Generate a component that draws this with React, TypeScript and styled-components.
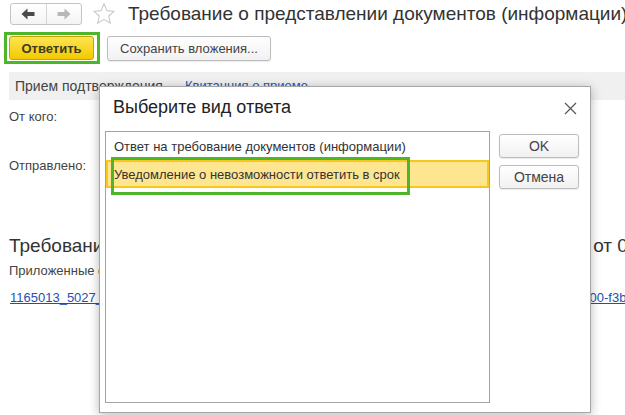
import styled, { createGlobalStyle } from "styled-components"

const GlobalStyle = createGlobalStyle`
  html, body {
    margin: 0;
    padding: 0;
    background: #fff;
    overflow: hidden;
  }
  body {
    font-family: "Liberation Sans", Arial, sans-serif;
    color: #333;
  }
`

const REPLY_KINDS = [
  "Ответ на требование документов (информации)",
  "Уведомление о невозможности ответить в срок",
]

export default function App() {
  return (
    <>
      <GlobalStyle />
      <Page>
        <Header>
          <NavGroup>
            <NavButton>
              <Arrow $active />
            </NavButton>
            <NavButton>
              <Arrow $flip />
            </NavButton>
          </NavGroup>
          <Star />
          <Title>Требование о представлении документов (информации)</Title>
        </Header>

        <CommandBar>
          <Marked>
            <DefaultButton>Ответить</DefaultButton>
          </Marked>
          <Button>Сохранить вложения...</Button>
        </CommandBar>

        <Tabs>
          <Tab>Прием подтверждения</Tab>
          <TabLink>Квитанция о приеме</TabLink>
        </Tabs>

        <Fields>
          <FieldRow $height={45}>От кого:</FieldRow>
          <FieldRow $height={22}>Отправлено:</FieldRow>
        </Fields>

        <DocHeading>
          Требование о представлении документов (информации) № 21-07 от 05.03.2020
        </DocHeading>
        <Caption>Приложенные файлы:</Caption>
        <FileLink>
          1165013_5027_502701001_502701001_20200305_12345678900_7c1d2a4e-5b3f-4e61-9a2b-1c5e-00-f3b8d2c14e7a.xml
        </FileLink>

        <Dialog>
          <DialogHead>
            <DialogTitle>Выберите вид ответа</DialogTitle>
            <CloseIcon />
          </DialogHead>
          <DialogBody>
            <List>
              {REPLY_KINDS.map((kind, i) => (
                <ListRow key={kind} $selected={i === 1}>
                  {kind}
                </ListRow>
              ))}
              <RowMark />
            </List>
            <Actions>
              <Button $wide>OK</Button>
              <Button $wide>Отмена</Button>
            </Actions>
          </DialogBody>
        </Dialog>
      </Page>
    </>
  )
}

function Arrow({ $active, $flip }: { $active?: boolean; $flip?: boolean }) {
  return (
    <svg
      width="14"
      height="12"
      viewBox="0 0 14 12"
      style={{ transform: $flip ? "scaleX(-1)" : undefined }}
    >
      <path
        d="M0.5 6 L6.5 0.5 L6.5 4 L13.5 4 L13.5 8 L6.5 8 L6.5 11.5 Z"
        fill={$active ? "#4a4a4a" : "#b8b8b8"}
      />
    </svg>
  )
}

function Star() {
  return (
    <StarBox>
      <svg width="24" height="24" viewBox="0 0 24 24">
        <path
          d="M12 1.8 L14.9 8.6 L22.3 9.2 L16.7 14 L18.4 21.3 L12 17.4 L5.6 21.3 L7.3 14 L1.7 9.2 L9.1 8.6 Z"
          fill="none"
          stroke="#c9c9c9"
          strokeWidth="1.1"
          strokeLinejoin="round"
        />
      </svg>
    </StarBox>
  )
}

function CloseIcon() {
  return (
    <CloseBox>
      <svg width="13" height="13" viewBox="0 0 13 13">
        <path d="M1 1 L12 12 M12 1 L1 12" stroke="#555" strokeWidth="1.2" />
      </svg>
    </CloseBox>
  )
}

const Page = styled.div`
  position: relative;
  width: 625px;
  height: 415px;
  overflow: hidden;
`

const Header = styled.div`
  display: flex;
  align-items: center;
  height: 22px;
  padding: 3px 0 0 10px;
  white-space: nowrap;
`

const NavGroup = styled.div`
  display: flex;
  flex-shrink: 0;
  width: 72px;
  height: 22px;
  box-sizing: border-box;
  border: 1px solid #c4c4c4;
  border-radius: 3px;
  background: linear-gradient(#fff, #f4f4f4);
`

const NavButton = styled.div`
  flex: 1;
  display: flex;
  align-items: center;
  justify-content: center;
  & + & {
    border-left: 1px solid #d6d6d6;
  }
`

const StarBox = styled.div`
  display: flex;
  flex-shrink: 0;
  margin: 0 12px 0 10px;
`

const Title = styled.h1`
  flex-shrink: 0;
  margin: 0;
  font-size: 19px;
  font-weight: normal;
  color: #333;
`

const CommandBar = styled.div`
  display: flex;
  align-items: center;
  gap: 7px;
  margin-top: 7px;
  padding-left: 4px;
`

const Marked = styled.div`
  display: flex;
  align-items: center;
  width: 96px;
  height: 32px;
  box-sizing: border-box;
  border: 3px solid #4cb52a;
  padding: 0 3px 0 2px;
`

const DefaultButton = styled.div`
  flex: 1;
  height: 24px;
  box-sizing: border-box;
  display: flex;
  align-items: center;
  justify-content: center;
  border: 1px solid #c9a200;
  border-radius: 3px;
  background: linear-gradient(#fbe552, #f3ca00);
  font-size: 13px;
  font-weight: bold;
  color: #3f3a20;
`

const Button = styled.div<{ $wide?: boolean }>`
  display: flex;
  align-items: center;
  justify-content: center;
  box-sizing: border-box;
  height: ${(p) => (p.$wide ? "24px" : "25px")};
  width: ${(p) => (p.$wide ? "80px" : "164px")};
  border: 1px solid #bcbcbc;
  border-radius: 3px;
  background: linear-gradient(#fff, #f1f1f1);
  box-shadow: 0 1px 1px rgba(0, 0, 0, 0.08);
  font-size: ${(p) => (p.$wide ? "14px" : "13px")};
  color: #444;
`

const Tabs = styled.div`
  display: flex;
  align-items: center;
  gap: 22px;
  height: 28px;
  margin: 8px 0 0 9px;
  padding-left: 6px;
  background: #f0f0f0;
  white-space: nowrap;
`

const Tab = styled.span`
  font-size: 14px;
  color: #444;
`

const TabLink = styled.span`
  font-size: 13px;
  color: #1f56b8;
  border-bottom: 1px dashed #1f56b8;
`

const Fields = styled.div`
  display: flex;
  flex-direction: column;
  gap: 4px;
  margin: 6px 0 0 9px;
`

const FieldRow = styled.div<{ $height: number }>`
  height: ${(p) => p.$height}px;
  line-height: 22px;
  font-size: 13px;
  color: #444;
`

const DocHeading = styled.h2`
  margin: 58px 0 0 9px;
  font-size: 19px;
  font-weight: normal;
  color: #333;
  white-space: nowrap;
`

const Caption = styled.div`
  margin: 6px 0 0 9px;
  font-size: 13px;
  color: #444;
`

const FileLink = styled.div`
  margin: 12px 0 0 10px;
  font-size: 13px;
  color: #1f4fb4;
  text-decoration: underline;
  white-space: nowrap;
`

const Dialog = styled.div`
  position: absolute;
  left: 99px;
  top: 86px;
  width: 492px;
  height: 327px;
  box-sizing: border-box;
  border: 1px solid #a6a6a6;
  background: #fff;
  box-shadow: 0 2px 10px rgba(0, 0, 0, 0.28);
  display: flex;
  flex-direction: column;
`

const DialogHead = styled.div`
  display: flex;
  align-items: center;
  justify-content: space-between;
  height: 40px;
  padding: 0 13px 0 13px;
`

const DialogTitle = styled.div`
  font-size: 18px;
  color: #222;
`

const CloseBox = styled.div`
  display: flex;
  margin-top: 2px;
`

const DialogBody = styled.div`
  display: flex;
  gap: 9px;
  padding: 4px 11px 0 5px;
`

const List = styled.div`
  position: relative;
  width: 386px;
  height: 272px;
  box-sizing: border-box;
  border: 1px solid #a3a3a3;
`

const ListRow = styled.div<{ $selected?: boolean }>`
  height: 28px;
  box-sizing: border-box;
  display: flex;
  align-items: center;
  padding-left: ${(p) => (p.$selected ? "6px" : "8px")};
  font-size: 13px;
  color: #333;
  background: ${(p) => (p.$selected ? "#fee590" : "transparent")};
  border: ${(p) => (p.$selected ? "2px solid #f7c71a" : "none")};
`

const RowMark = styled.div`
  position: absolute;
  left: 5px;
  top: 25px;
  width: 299px;
  height: 38px;
  box-sizing: border-box;
  border: 3px solid #4cb52a;
`

const Actions = styled.div`
  display: flex;
  flex-direction: column;
  gap: 7px;
  padding-top: 3px;
`
